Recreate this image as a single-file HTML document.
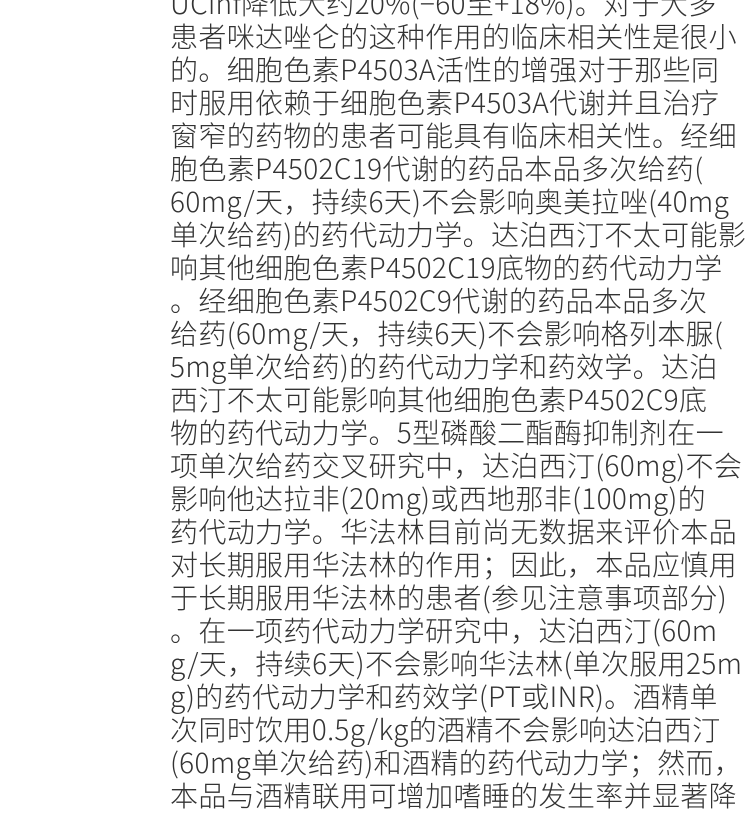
<!DOCTYPE html>
<html><head><meta charset="utf-8"><style>
html,body{margin:0;padding:0;background:#fff;width:750px;height:800px;overflow:hidden}
.t{position:absolute;left:170px;top:-13px;font-family:"Noto Sans CJK SC",sans-serif;font-weight:300;font-size:28px;letter-spacing:0.35px;line-height:33px;color:#333;white-space:nowrap}
.t div{height:33px}
</style></head><body><div class="t">
<div>UCinf降低大约20%(−60至+18%)。对于大多</div>
<div>患者咪达唑仑的这种作用的临床相关性是很小</div>
<div>的。细胞色素P4503A活性的增强对于那些同</div>
<div>时服用依赖于细胞色素P4503A代谢并且治疗</div>
<div>窗窄的药物的患者可能具有临床相关性。经细</div>
<div>胞色素P4502C19代谢的药品本品多次给药(</div>
<div>60mg/天，持续6天)不会影响奥美拉唑(40mg</div>
<div>单次给药)的药代动力学。达泊西汀不太可能影</div>
<div>响其他细胞色素P4502C19底物的药代动力学</div>
<div>。经细胞色素P4502C9代谢的药品本品多次</div>
<div>给药(60mg/天，持续6天)不会影响格列本脲(</div>
<div>5mg单次给药)的药代动力学和药效学。达泊</div>
<div>西汀不太可能影响其他细胞色素P4502C9底</div>
<div>物的药代动力学。5型磷酸二酯酶抑制剂在一</div>
<div>项单次给药交叉研究中，达泊西汀(60mg)不会</div>
<div>影响他达拉非(20mg)或西地那非(100mg)的</div>
<div>药代动力学。华法林目前尚无数据来评价本品</div>
<div>对长期服用华法林的作用；因此，本品应慎用</div>
<div>于长期服用华法林的患者(参见注意事项部分)</div>
<div>。在一项药代动力学研究中，达泊西汀(60m</div>
<div>g/天，持续6天)不会影响华法林(单次服用25m</div>
<div>g)的药代动力学和药效学(PT或INR)。酒精单</div>
<div>次同时饮用0.5g/kg的酒精不会影响达泊西汀</div>
<div>(60mg单次给药)和酒精的药代动力学；然而，</div>
<div>本品与酒精联用可增加嗜睡的发生率并显著降</div>
</div></body></html>
